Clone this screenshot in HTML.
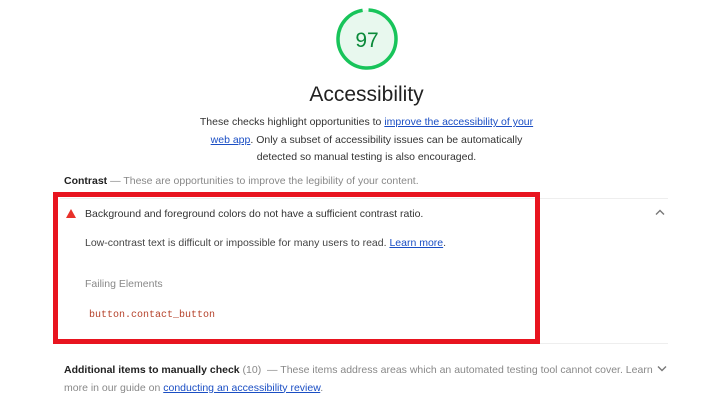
<!DOCTYPE html>
<html><head><meta charset="utf-8"><style>
body{margin:0;width:721px;height:419px;background:#fff;font-family:"Liberation Sans",sans-serif;position:relative;overflow:hidden}
.a{position:absolute;white-space:nowrap}
a{color:#1a4ec4;text-decoration:underline}
</style></head><body>
<svg class="a" style="left:334px;top:6px" width="66" height="66" viewBox="0 0 66 66">
<circle cx="33" cy="33" r="29" fill="#e8f8ee"/>
<circle cx="33" cy="33" r="29" fill="none" stroke="#18c45a" stroke-width="3.5" stroke-dasharray="176 6.2" transform="rotate(-87 33 33)"/>
<text x="33" y="41" text-anchor="middle" font-family="Liberation Sans" font-size="21" fill="#0b8a3a">97</text>
</svg>
<div class="a" style="left:0;width:733px;text-align:center;top:83px;font-size:21px;color:#222">Accessibility</div>
<div class="a" style="left:0;width:733px;text-align:center;top:114px;font-size:10.5px;line-height:17.5px;color:#333">These checks highlight opportunities to <a>improve the accessibility of your</a><br><a>web app</a>. Only a subset of accessibility issues can be automatically<br>detected so manual testing is also encouraged.</div>
<div class="a" style="left:64px;top:175px;font-size:10.5px;color:#888"><b style="color:#222">Contrast</b> — These are opportunities to improve the legibility of your content.</div>
<div class="a" style="left:60px;top:198px;width:608px;height:1px;background:#eee"></div>
<div class="a" style="left:60px;top:343px;width:608px;height:1px;background:#eee"></div>
<div class="a" style="left:53px;top:192px;width:477px;height:142px;border:5px solid #e8141f"></div>
<div class="a" style="left:66px;top:209px;width:0;height:0;border-left:5px solid transparent;border-right:5px solid transparent;border-bottom:9px solid #e8312a"></div>
<div class="a" style="left:85px;top:208px;font-size:10.5px;color:#333">Background and foreground colors do not have a sufficient contrast ratio.</div>
<svg class="a" style="left:655px;top:209px" width="10" height="7" viewBox="0 0 10 7"><path d="M1 5.5L5 1.5L9 5.5" fill="none" stroke="#777" stroke-width="1.4"/></svg>
<div class="a" style="left:85px;top:237px;font-size:10.5px;color:#444">Low-contrast text is difficult or impossible for many users to read. <a>Learn more</a>.</div>
<div class="a" style="left:85px;top:278px;font-size:10.5px;color:#888">Failing Elements</div>
<div class="a" style="left:89px;top:310px;font-size:10px;color:#b5412a;font-family:'Liberation Mono',monospace">button.contact_button</div>
<div class="a" style="left:64px;top:362px;font-size:10.5px;color:#888;line-height:17.5px"><b style="color:#222">Additional items to manually check</b> (10) &nbsp;— These items address areas which an automated testing tool cannot cover. Learn<br>more in our guide on <a>conducting an accessibility review</a>.</div>
<svg class="a" style="left:657px;top:365px" width="10" height="7" viewBox="0 0 10 7"><path d="M1 1.5L5 5.5L9 1.5" fill="none" stroke="#777" stroke-width="1.4"/></svg>
</body></html>
